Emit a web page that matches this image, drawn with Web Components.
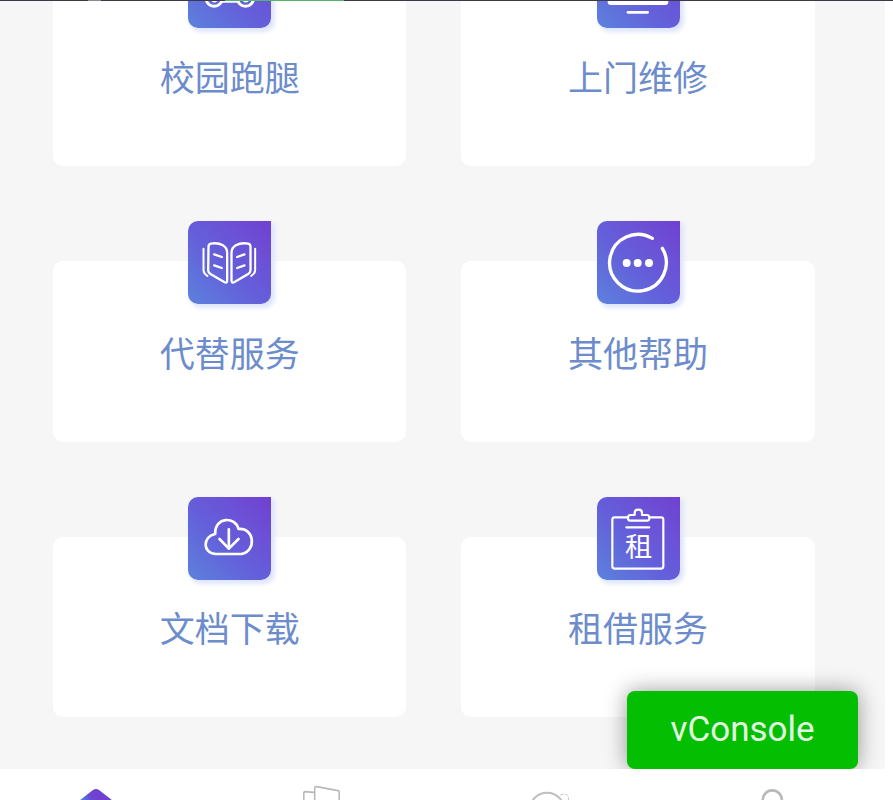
<!DOCTYPE html>
<html lang="zh-CN">
<head>
<meta charset="utf-8">
<title>校园服务</title>
<style>
html,body{margin:0;height:100%;overflow:hidden;background:#fff}
</style>
</head>
<body>
<campus-app></campus-app>
<script>
const glyphs = {
  bike: ['55.5 -165 249 249', `<g stroke-width="9"><circle cx="134" cy="-5" r="24"/><circle cx="228" cy="-5" r="24"/><path d="M156 5H206M128 0Q134 8 142 0M222 0Q228 8 236 0" stroke-width="7"/></g>`],
  monitor: ['51 -165 249 249', `<rect x="83" y="-120" width="182" height="135" rx="9" fill="#fff" stroke="none"/><path d="M144 37H203" stroke-width="8"/>`],
  book: ['55.5 48 249 249', `<g stroke-width="7"><path d="M117 126Q117 118 124 116Q145 112 160 121Q173 129 173 143V226Q173 236 164 231L123 207Q116 203 116 196Z"/><path d="M243 126Q243 118 236 116Q215 112 199 121Q186 129 186 143V226Q186 236 195 231L236 207Q243 203 243 196Z"/><path d="M102 131V196Q102 205 114 213M257 131V196Q257 205 245 213" stroke-width="6"/><path d="M134 148L157 156M134 181L157 189M225 148L203 156M225 181L203 189"/></g>`],
  more: ['51 48 249 249', `<path d="M217 100A85 85 0 1 0 247 130" stroke-width="10"/><g fill="#fff" stroke="none"><circle cx="140" cy="174" r="12"/><circle cx="173" cy="174" r="12"/><circle cx="207" cy="174" r="12"/></g>`],
  cloud: ['55.5 50 249 249', `<path d="M139 221C98 219 99 168 137 161C136 108 198 108 207 146C254 141 263 211 216 221Z" stroke-width="8"/><path d="M178 147V205M150 176L178 205L207 176" stroke-width="8"/>`],
  rent: ['51 50 249 249', `<g stroke-width="6.5"><path d="M144 111H104Q97 111 97 118V258Q97 265 104 265H243Q250 265 250 258V118Q250 111 243 111H208"/><path d="M150 121Q144 121 144 113Q144 104 151 104H164V97Q164 88 175 88Q186 88 186 97V104H201Q208 104 208 113Q208 121 202 121ZM139 141H208"/></g><text x="176" y="229" text-anchor="middle" font-size="82" font-family="Noto Sans CJK SC,sans-serif" fill="#fff" stroke="none">租</text>`]
};

class ServiceIcon extends HTMLElement {
  connectedCallback() {
    const [box, art] = glyphs[this.getAttribute('name')];
    this.attachShadow({mode:'open'}).innerHTML = `
<style>
:host{display:block;width:83px;height:83px;border-radius:10px 0 10px 10px;background:linear-gradient(45deg,#5c82dd 0%,#645fda 45%,#6b52d6 70%,#7040d0 100%);box-shadow:3px 3px 4px 1px #dfe6fc}
svg{display:block;width:83px;height:83px;overflow:hidden}
</style>
<svg viewBox="${box}" fill="none" stroke="#fff" stroke-linecap="round" stroke-linejoin="round">${art}</svg>`;
  }
}
customElements.define('service-icon', ServiceIcon);

class ServiceCard extends HTMLElement {
  connectedCallback() {
    this.attachShadow({mode:'open'}).innerHTML = `
<style>
:host{display:flex;flex-direction:column;align-items:center;background:#fff;border-radius:10px;height:180.6px}
service-icon{margin-top:-40px}
.label{margin-top:21.6px;font:35px/52px "Noto Sans CJK SC",sans-serif;color:#6c8ccb;white-space:nowrap}
</style>
<service-icon name="${this.getAttribute('icon')}"></service-icon>
<div class="label"><slot></slot></div>`;
  }
}
customElements.define('service-card', ServiceCard);

class TabBar extends HTMLElement {
  connectedCallback() {
    this.attachShadow({mode:'open'}).innerHTML = `
<style>
:host{display:grid;grid-template-columns:repeat(4,225px);margin-left:-16px;height:31px;overflow:hidden;background:#fff}
svg{display:block;width:60px;height:60px;margin:0 auto;overflow:visible}
</style>
<svg viewBox="67 769 60 60" fill="none"><defs><linearGradient id="g" gradientUnits="userSpaceOnUse" x1="82" y1="802" x2="96" y2="793"><stop stop-color="#4b86e0"/><stop offset=".6" stop-color="#6848d4"/><stop offset="1" stop-color="#7040d0"/></linearGradient></defs><path d="M75 804L93 790Q96 788 99 790L117 804V825H75Z" fill="url(#g)"/></svg>
<svg viewBox="292 769 60 60" fill="none" stroke="#b9b9b9" stroke-width="1.6" stroke-linejoin="round"><path d="M314.7 822V788Q314.7 786.3 316.5 786.6L338 790.6Q339.2 791 339.2 792V822M314 792.4L305 791.6Q303.8 791.6 303.8 793V822"/></svg>
<svg viewBox="517 769 60 60" fill="none" stroke="#bfbfbf"><circle cx="547" cy="810" r="17.3" stroke-width="2"/><path d="M560 795Q568 792 568.5 798V802" stroke-width=".8" stroke-dasharray="4 1"/></svg>
<svg viewBox="742 769 60 60" fill="none" stroke="#b9b9b9" stroke-width="2.6"><circle cx="772.3" cy="800" r="9.6"/></svg>`;
  }
}
customElements.define('tab-bar', TabBar);

class ConsoleButton extends HTMLElement {
  connectedCallback() {
    this.attachShadow({mode:'open'}).innerHTML = `
<style>
:host{display:flex;align-items:center;justify-content:center;box-sizing:border-box;padding-bottom:2px;width:231px;height:78px;border-radius:8px;background:#04be02;color:#e2f8e0;font:35px/1 Roboto,sans-serif;box-shadow:0 0 22px rgba(0,0,0,.4)}
</style><span><slot></slot></span>`;
  }
}
customElements.define('console-button', ConsoleButton);

class CampusApp extends HTMLElement {
  connectedCallback() {
    this.attachShadow({mode:'open'}).innerHTML = `
<style>
:host{display:flex;flex-direction:column;width:893px;height:800px;overflow:hidden}
.status{height:1px;flex:none;background:linear-gradient(90deg,#3b3949 88px,#8d8793 88px 101px,#3b3949 101px 225px,#57b46b 225px 344px,#3b3949 344px)}
main{position:relative;box-sizing:border-box;width:885px;height:768px;flex:none;overflow:hidden;background:#f6f6f6}
.page{display:grid;grid-template-columns:353.4px 353.4px;column-gap:55px;row-gap:95px;padding-left:53px;margin-top:-15.6px}
console-button{position:absolute;right:27px;bottom:0}
tab-bar{flex:none}
</style>
<div class="status"></div>
<main><div class="page">
<service-card icon="bike">校园跑腿</service-card>
<service-card icon="monitor">上门维修</service-card>
<service-card icon="book">代替服务</service-card>
<service-card icon="more">其他帮助</service-card>
<service-card icon="cloud">文档下载</service-card>
<service-card icon="rent">租借服务</service-card>
</div><console-button>vConsole</console-button></main>
<tab-bar></tab-bar>`;
  }
}
customElements.define('campus-app', CampusApp);
</script>
</body>
</html>
